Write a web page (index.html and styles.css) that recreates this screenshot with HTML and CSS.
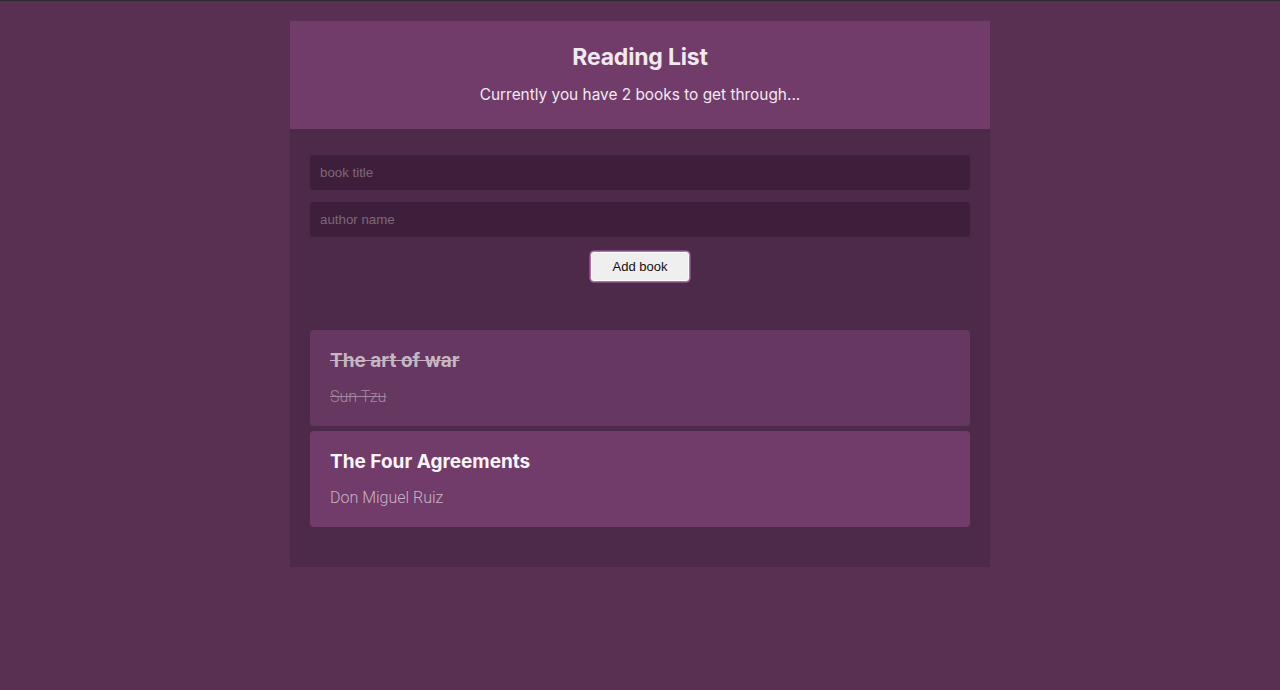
FILE: index.html
```html
<!DOCTYPE html>
<html>
<head>
<meta charset="utf-8">
<link rel="stylesheet" href="styles.css">
</head>
<body>
<div class="app">
  <header class="header">
    <h1 class="title">Reading List</h1>
    <p class="subtitle">Currently you have 2 books to get through...</p>
  </header>
  <main class="panel">
    <form class="form">
      <input class="field" type="text" placeholder="book title">
      <input class="field" type="text" placeholder="author name">
      <button class="add-btn" type="button">Add book</button>
    </form>
    <ul class="books">
      <li class="book done">
        <div class="book-title">The art of war</div>
        <div class="book-author">Sun Tzu</div>
      </li>
      <li class="book">
        <div class="book-title">The Four Agreements</div>
        <div class="book-author">Don Miguel Ruiz</div>
      </li>
    </ul>
  </main>
</div>
</body>
</html>
```
FILE: styles.css
```css
html, body {
  margin: 0;
  padding: 0;
}
body {
  background: #5a3052;
  border-top: 1px solid #2b2b2b;
  font-family: Inter, "Liberation Sans", sans-serif;
  min-height: 689px;
}
.app {
  width: 700px;
  margin: 20px auto 0;
}
.header {
  background: #713c6a;
  height: 108px;
  box-sizing: border-box;
  padding-top: 21px;
  text-align: center;
  color: #f1e8f0;
}
.title {
  margin: 0;
  font-size: 23px;
  font-weight: 700;
  line-height: 30px;
  letter-spacing: -0.2px;
}
.subtitle {
  margin: 13px 0 0;
  font-size: 15.4px;
  line-height: 20px;
}
.panel {
  background: #4d2a4a;
  padding: 26px 20px 40px;
}
.form {
  display: flex;
  flex-direction: column;
  align-items: center;
}
.field {
  width: 100%;
  box-sizing: border-box;
  height: 35px;
  margin: 0 0 12px;
  background: #3e1f3b;
  border: none;
  border-radius: 4px;
  padding: 0 10px;
  font-family: "Liberation Sans", Arial, sans-serif;
  font-size: 13.3px;
  color: #ddd;
  outline: none;
}
.field::placeholder {
  color: #7c6779;
}
.add-btn {
  margin-top: 3px;
  width: 98px;
  height: 29px;
  background: #efefef;
  border: 1px solid #ffffff;
  box-shadow: 0 0 0 1.5px #b16fab;
  border-radius: 3px;
  font-family: "Liberation Sans", Arial, sans-serif;
  font-size: 13px;
  color: #111;
  padding: 0;
}
.books {
  list-style: none;
  margin: 49px 0 0;
  padding: 0;
  display: flex;
  flex-direction: column;
  gap: 5px;
}
.book {
  background: #713c6a;
  border-radius: 4px;
  height: 96px;
  box-sizing: border-box;
  padding: 18px 20px 0;
}
.book.done {
  background: #653761;
}
.book-title {
  font-family: Inter, "Liberation Sans", sans-serif;
  font-weight: 700;
  font-size: 19px;
  line-height: 26px;
  color: #fbf5fa;
}
.book-author {
  margin-top: 13px;
  font-family: Roboto, "Liberation Sans", sans-serif;
  font-weight: 300;
  font-size: 16px;
  line-height: 20px;
  color: #c9b3c6;
}
.book.done .book-title {
  color: #c6b6c4;
  text-decoration: line-through;
}
.book.done .book-author {
  color: #a4889f;
  text-decoration: line-through;
}
```
